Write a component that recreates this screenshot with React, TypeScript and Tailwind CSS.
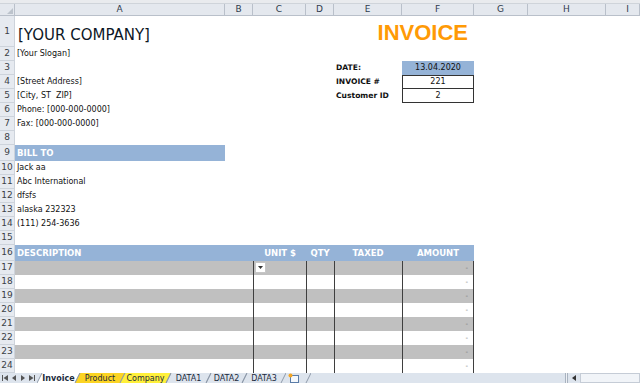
import React from "react";

const GRID = "grid grid-cols-[15px_210px_28px_53px_28px_68px_72px_54px_78px_1fr] grid-rows-1";

const letters = ["A", "B", "C", "D", "E", "F", "G", "H", "I"];

function RowHead({ n }: { n: number }) {
  return (
    <div className="flex items-center justify-center border-r border-b border-[#cdd3db] bg-[#e6eaf0] text-[9px] leading-none text-[#3a3f47]">
      {n}
    </div>
  );
}

function Row({ n, h, children }: { n: number; h?: string; children?: React.ReactNode }) {
  return (
    <div className={`${GRID} ${h ?? "h-[14px]"}`}>
      <RowHead n={n} />
      {children}
    </div>
  );
}

function Text({ children }: { children: React.ReactNode }) {
  return (
    <div className="col-start-2 col-span-4 flex items-center whitespace-nowrap pl-[2px] text-[8px] text-[#111]">
      {children}
    </div>
  );
}

function Label({ children }: { children: React.ReactNode }) {
  return (
    <div className="col-start-6 flex items-center whitespace-nowrap pl-[2px] text-[7.6px] font-bold text-[#111]">
      {children}
    </div>
  );
}

function LineRow({ n, shaded, first }: { n: number; shaded: boolean; first?: boolean }) {
  const bg = shaded ? "bg-[#c0c0c0]" : "bg-white";
  return (
    <Row n={n}>
      <div className={`col-start-2 col-span-2 ${bg}`} />
      <div className={`border-l border-[#3f3f3f] ${bg}`}>
        {first && (
          <div className="ml-[1px] mt-[1px] flex h-[11px] w-[11px] items-center justify-center border border-[#c6c6c6] bg-white">
            <svg width="5" height="3" viewBox="0 0 5 3">
              <polygon points="0,0 5,0 2.5,3" fill="#333" />
            </svg>
          </div>
        )}
      </div>
      <div className={`border-l border-[#3f3f3f] ${bg}`} />
      <div className={`border-l border-[#3f3f3f] ${bg}`} />
      <div className={`flex items-center justify-end border-l border-r border-[#3f3f3f] pr-[5px] text-[7px] leading-none text-[#777] ${bg}`}>
        -
      </div>
    </Row>
  );
}

function Tab({
  label,
  w,
  cls,
  fill,
  bold,
}: {
  label: string;
  w: number;
  cls: string;
  fill?: string;
  bold?: boolean;
}) {
  const s = 5;
  return (
    <div className={`relative -ml-[5px] h-full shrink-0 ${cls}`}>
      <svg className="absolute inset-0" width={w} height="10" viewBox={`0 0 ${w} 10`}>
        {fill && <polygon points={`${s},0 ${w},0 ${w - s},10 0,10`} fill={fill} />}
        <line x1={s} y1="0" x2="0" y2="10" stroke="#8f9aaa" strokeWidth="1" />
        <line x1={w} y1="0" x2={w - s} y2="10" stroke="#8f9aaa" strokeWidth="1" />
      </svg>
      <div
        className={`relative flex justify-center pt-[2px] text-[8px] leading-none text-[#1b2a3c] ${
          bold ? "font-bold" : ""
        }`}
      >
        {label}
      </div>
    </div>
  );
}

export default function App() {
  return (
    <div className="flex h-[383px] w-[640px] flex-col overflow-hidden bg-white font-['DejaVu_Sans',sans-serif]">
      <div className="h-[4px] shrink-0 border-b border-[#cfd4da] bg-[#e9ebee]" />

      {/* column headers */}
      <div className={`${GRID} h-[12px] shrink-0`}>
        <div className="relative border-r border-b border-[#b9c0ca] bg-[#e4e8ee]">
          <svg className="absolute bottom-[1px] right-[1px]" width="6" height="6" viewBox="0 0 6 6">
            <polygon points="6,0 6,6 0,6" fill="#bcc3cc" />
          </svg>
        </div>
        {letters.map((l, i) => (
          <div
            key={l}
            className={`flex items-center justify-center border-r border-b border-[#b9c0ca] bg-[#e4e8ee] text-[9px] leading-none text-[#2f3b4c] ${
              i === 8 ? "pl-[10px]" : ""
            }`}
          >
            {l}
          </div>
        ))}
      </div>

      <Row n={1} h="h-[31px]">
        <div className="col-start-2 col-span-4 flex items-end whitespace-nowrap pb-[4px] pl-[3px] text-[15px] leading-none text-[#0d1726]">
          [YOUR COMPANY]
        </div>
        <div className="col-start-6 col-span-2 flex items-end justify-end pb-[3px] pr-[6px] font-['Liberation_Sans',sans-serif] text-[22px] font-bold leading-none text-[#ff9a05]">
          INVOICE
        </div>
      </Row>
      <Row n={2}>
        <Text>[Your Slogan]</Text>
      </Row>
      <Row n={3}>
        <Label>DATE:</Label>
        <div className="col-start-7 flex items-center justify-center bg-[#95b3d7] text-[8px] text-[#111]">
          13.04.2020
        </div>
      </Row>
      <Row n={4}>
        <Text>[Street Address]</Text>
        <Label>INVOICE #</Label>
        <div className="col-start-7 flex items-center justify-center border border-[#333] text-[8px] text-[#111]">
          221
        </div>
      </Row>
      <Row n={5}>
        <Text>[City, ST&nbsp;&nbsp;ZIP]</Text>
        <Label>Customer ID</Label>
        <div className="col-start-7 flex items-center justify-center border-x border-b border-[#333] text-[8px] text-[#111]">
          2
        </div>
      </Row>
      <Row n={6}>
        <Text>Phone: [000-000-0000]</Text>
      </Row>
      <Row n={7}>
        <Text>Fax: [000-000-0000]</Text>
      </Row>
      <Row n={8} />
      <Row n={9} h="h-[16px]">
        <div className="col-start-2 flex items-center bg-[#95b3d7] pl-[2px] text-[8.5px] font-bold text-white">
          BILL TO
        </div>
      </Row>
      <Row n={10}>
        <Text>Jack aa</Text>
      </Row>
      <Row n={11}>
        <Text>Abc International</Text>
      </Row>
      <Row n={12}>
        <Text>dfsfs</Text>
      </Row>
      <Row n={13}>
        <Text>alaska 232323</Text>
      </Row>
      <Row n={14}>
        <Text>(111) 254-3636</Text>
      </Row>
      <Row n={15} />
      <Row n={16} h="h-[16px]">
        <div className="col-start-2 col-span-2 flex items-center bg-[#95b3d7] pl-[2px] text-[8.5px] font-bold text-white">
          DESCRIPTION
        </div>
        <div className="flex items-center justify-end whitespace-nowrap bg-[#95b3d7] pr-[10px] text-[8.5px] font-bold text-white">
          UNIT $
        </div>
        <div className="flex items-center justify-center bg-[#95b3d7] text-[8.5px] font-bold text-white">QTY</div>
        <div className="flex items-center justify-center bg-[#95b3d7] text-[8.5px] font-bold text-white">TAXED</div>
        <div className="flex items-center justify-center bg-[#95b3d7] text-[8.5px] font-bold text-white">AMOUNT</div>
      </Row>
      {[17, 18, 19, 20, 21, 22, 23, 24].map((n) => (
        <LineRow key={n} n={n} shaded={n % 2 === 1} first={n === 17} />
      ))}

      {/* sheet tabs */}
      <div className="flex h-[10px] shrink-0 bg-[#dde4ed]">
        <div className="flex w-[565px] shrink-0">
          <div className="flex w-[42px] shrink-0 items-start gap-[3px] pl-[2px] pt-[2px]">
            <svg width="6" height="6" viewBox="0 0 6 6">
              <rect x="0" y="0" width="1" height="6" fill="#555" />
              <polygon points="6,0 6,6 1.5,3" fill="#555" />
            </svg>
            <svg width="6" height="6" viewBox="0 0 6 6">
              <polygon points="5,0 5,6 1,3" fill="#555" />
            </svg>
            <svg width="6" height="6" viewBox="0 0 6 6">
              <polygon points="1,0 1,6 5,3" fill="#555" />
            </svg>
            <svg width="6" height="6" viewBox="0 0 6 6">
              <polygon points="0,0 0,6 4.5,3" fill="#555" />
              <rect x="5" y="0" width="1" height="6" fill="#555" />
            </svg>
          </div>
          <Tab label="Invoice" w={43} cls="w-[43px]" fill="#ffffff" bold />
          <Tab label="Product" w={50} cls="w-[50px]" fill="#fcd423" />
          <Tab label="Company" w={51} cls="w-[51px]" fill="#fff03a" />
          <Tab label="DATA1" w={45} cls="w-[45px]" />
          <Tab label="DATA2" w={41} cls="w-[41px]" />
          <Tab label="DATA3" w={44} cls="w-[44px]" />
          <div className="relative -ml-[5px] h-full w-[30px] shrink-0">
            <svg className="absolute inset-0" width="30" height="10" viewBox="0 0 30 10">
              <rect x="9.5" y="2.5" width="8" height="7" fill="#f4f8fc" stroke="#5a7ca8" />
              <circle cx="9.5" cy="2.5" r="2" fill="#f5a623" />
              <line x1="30" y1="0" x2="25" y2="10" stroke="#8f9aaa" />
            </svg>
          </div>
        </div>
        <div className="flex flex-1 items-stretch">
          <div className="w-[3px] border-x border-[#a8b2bf] bg-[#eef1f5]" />
          <div className="flex w-[12px] items-center justify-center">
            <svg width="4" height="6" viewBox="0 0 4 6">
              <polygon points="4,0 4,6 0,3" fill="#333" />
            </svg>
          </div>
          <div className="flex-1 border border-[#c5ccd6] bg-[#f1f4f8]" />
        </div>
      </div>
    </div>
  );
}
